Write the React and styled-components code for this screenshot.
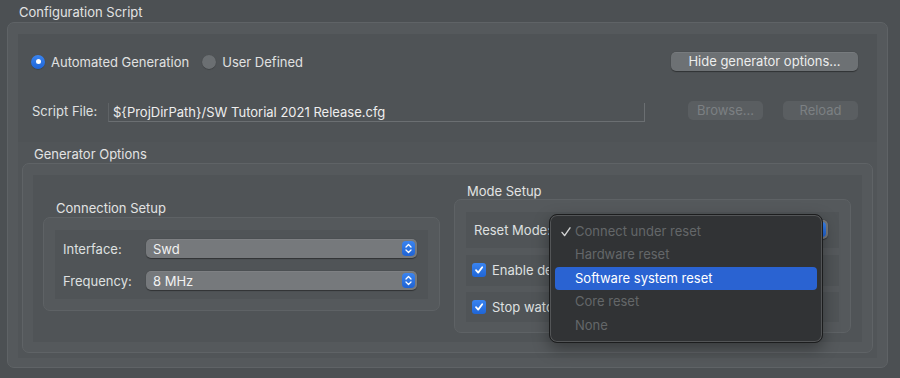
import React from 'react';
import styled, { createGlobalStyle } from 'styled-components';

const GlobalStyle = createGlobalStyle`
    html, body {
        margin: 0;
        padding: 0;
        background-color: #4c5053;
    }

    body {
        font-family: "Inter", "Liberation Sans", sans-serif;
        font-size: 13px;
        color: #dfe0e0;
        -webkit-font-smoothing: antialiased;
    }
`;

const Page = styled.div`
    width: 900px;
    height: 378px;
    padding: 0 0 0 7px;
    box-sizing: border-box;
    overflow: hidden;
`;

const GroupTitle = styled.div`
    height: ${props => props.h || 22}px;
    line-height: ${props => (props.h || 22) + (props.drop || 0)}px;
    padding-left: ${props => props.indent || 12}px;
    font-size: 13px;
    color: #e2e3e3;
    white-space: nowrap;
`;

const OuterBox = styled.div`
    width: 881px;
    box-sizing: border-box;
    border: 1px solid #5f6366;
    border-radius: 7px;
    padding: 11px 10px 9px 10px;
    background-color: #55595c;
`;

const OuterBody = styled.div`
    display: flex;
    flex-direction: column;
    background-color: #515558;
`;

const TopPanel = styled.div`
    height: 108px;
    display: flex;
    flex-direction: column;
    background-color: #4f5356;
    padding: 18px 19px 0 13px;
    box-sizing: border-box;
`;

const Row = styled.div`
    display: flex;
    align-items: center;
    height: 19px;
    margin-top: ${props => props.mt || 0}px;
`;

const Spacer = styled.div`
    flex: 1;
`;

const RadioItem = styled.label`
    display: flex;
    align-items: center;
    gap: 6px;
    margin-right: 13px;
    font-size: 13px;
    color: #e0e1e1;
`;

const RadioDot = styled.span`
    width: 14px;
    height: 14px;
    border-radius: 50%;
    box-sizing: border-box;
    display: flex;
    align-items: center;
    justify-content: center;
    background: ${props => props.on ? 'linear-gradient(#3a84f0, #1f65d6)' : '#6b6f72'};
    box-shadow: 0 0.5px 1px rgba(0, 0, 0, 0.35);

    &::after {
        content: '';
        display: ${props => props.on ? 'block' : 'none'};
        width: 5px;
        height: 5px;
        border-radius: 50%;
        background-color: #ffffff;
    }
`;

const PushButton = styled.button`
    height: 19px;
    width: ${props => props.w}px;
    margin-left: ${props => props.ml || 0}px;
    padding: 0;
    border: none;
    border-radius: 5px;
    font-family: inherit;
    font-size: 13px;
    line-height: 19px;
    background-color: ${props => props.disabled ? '#5a5e61' : '#6d7174'};
    color: ${props => props.disabled ? '#7c8083' : '#eceded'};
    box-shadow: ${props => props.disabled ? 'none' : '0 0.5px 1px rgba(0, 0, 0, 0.4), inset 0 0.5px 0 rgba(255, 255, 255, 0.15)'};
`;

const FieldLabel = styled.span`
    width: ${props => props.w}px;
    flex-shrink: 0;
    font-size: 13px;
    color: #dfe0e0;
    white-space: nowrap;
`;

const TextField = styled.div`
    width: 537px;
    height: 19px;
    box-sizing: border-box;
    margin-top: 3px;
    padding-left: 4px;
    line-height: 18px;
    font-size: 13px;
    color: #eeeeee;
    border-left: 1px solid #5f6366;
    border-right: 1px solid #6b6f72;
    border-bottom: 1px solid #6b6f72;
    white-space: nowrap;
`;

const GenBox = styled.div`
    margin: 0 4px 5px 4px;
    border: 1px solid #5f6366;
    border-radius: 7px;
    padding: 11px 10px 10px 10px;
    background-color: #55595c;
`;

const GenBody = styled.div`
    height: 167px;
    display: flex;
    align-items: center;
    gap: 14px;
    padding-left: 10px;
    background-color: #505457;
`;

const Column = styled.div`
    width: 397px;
    display: flex;
    flex-direction: column;
    margin-bottom: ${props => props.mb || 0}px;
`;

const SubBox = styled.div`
    height: ${props => props.h}px;
    box-sizing: border-box;
    border: 1px solid #5e6265;
    border-radius: 7px;
    padding: ${props => props.pad};
    background-color: #55595c;
    display: flex;
    flex-direction: column;
    gap: ${props => props.gap || 0}px;
`;

const SubBody = styled.div`
    flex: 1;
    display: flex;
    flex-direction: column;
    gap: 13px;
    padding: 9px 11px 0 8px;
    background-color: #505457;
`;

const PopupRow = styled.div`
    display: flex;
    align-items: center;
    height: 19px;
`;

const Popup = styled.div`
    position: relative;
    flex: 1;
    height: 19px;
    box-sizing: border-box;
    border-radius: 5px;
    background-color: #76797c;
    box-shadow: 0 0.5px 1px rgba(0, 0, 0, 0.4), inset 0 0.5px 0 rgba(255, 255, 255, 0.12);
    display: flex;
    align-items: center;
    padding-left: 7px;
    font-size: 13px;
    color: #f2f2f2;
`;

const Stepper = styled.span`
    position: absolute;
    right: 2px;
    top: 2px;
    width: 13px;
    height: 15px;
    border-radius: 4px;
    background: linear-gradient(#3a84f0, #1f63d4);
    display: flex;
    align-items: center;
    justify-content: center;
`;

const ModeRow = styled.div`
    height: ${props => props.h}px;
    display: flex;
    align-items: center;
    padding: 0 11px 0 ${props => props.pl}px;
    margin-top: ${props => props.mt || 0}px;
    background-color: #505457;
    box-sizing: border-box;
`;

const CheckBox = styled.span`
    width: 14px;
    height: 14px;
    border-radius: 3px;
    background: linear-gradient(#3a84f0, #1f65d6);
    display: flex;
    align-items: center;
    justify-content: center;
    margin-right: 6px;
    flex-shrink: 0;
`;

const CheckLabel = styled.span`
    font-size: 13px;
    color: #dfe0e0;
    white-space: nowrap;
`;

const Menu = styled.div`
    position: absolute;
    left: -6px;
    top: -6px;
    width: 274px;
    height: 129px;
    box-sizing: border-box;
    border-radius: 8px;
    background-color: #313335;
    border: 1px solid #1c1d1e;
    box-shadow: inset 0 0 0 1px rgba(255, 255, 255, 0.17), 0 6px 16px rgba(0, 0, 0, 0.35);
    padding: 5px 5px;
    display: flex;
    flex-direction: column;
    z-index: 10;
`;

const MenuItem = styled.div`
    position: relative;
    height: 23.5px;
    line-height: 23px;
    padding-left: 20px;
    border-radius: 4px;
    font-size: 13px;
    background-color: ${props => props.active ? '#2a63d2' : 'transparent'};
    color: ${props => props.active ? '#ffffff' : '#646769'};
    white-space: nowrap;
`;

const CheckMark = styled.svg`
    position: absolute;
    left: 6px;
    top: 7px;
`;

const UpDown = () => (
    <svg width="7" height="11" viewBox="0 0 7 11">
        <path d="M1 4 L3.5 1.5 L6 4 M1 7 L3.5 9.5 L6 7" fill="none" stroke="#ffffff" strokeWidth="1.3" strokeLinecap="round" strokeLinejoin="round" />
    </svg>
);

const Tick = () => (
    <svg width="10" height="10" viewBox="0 0 10 10">
        <path d="M2 5.2 L4.2 7.6 L8.2 2.2" fill="none" stroke="#ffffff" strokeWidth="1.8" strokeLinecap="round" strokeLinejoin="round" />
    </svg>
);

const resetModes = ['Connect under reset', 'Hardware reset', 'Software system reset', 'Core reset', 'None'];

export default function App() {
    return (
        <Page>
            <GlobalStyle />
            <GroupTitle indent={12} drop={3}>Configuration Script</GroupTitle>
            <OuterBox>
                <OuterBody>
                    <TopPanel>
                        <Row>
                            <RadioItem><RadioDot on />Automated Generation</RadioItem>
                            <RadioItem><RadioDot />User Defined</RadioItem>
                            <Spacer />
                            <PushButton w={187}>Hide generator options...</PushButton>
                        </Row>
                        <Row mt={30}>
                            <FieldLabel w={76} style={{ paddingLeft: 1 }}>Script File:</FieldLabel>
                            <TextField>{'${ProjDirPath}/SW Tutorial 2021 Release.cfg'}</TextField>
                            <Spacer />
                            <PushButton w={75} disabled>Browse...</PushButton>
                            <PushButton w={75} ml={20} disabled>Reload</PushButton>
                        </Row>
                    </TopPanel>
                    <GroupTitle h={21} indent={16} drop={3}>Generator Options</GroupTitle>
                    <GenBox>
                        <GenBody>
                            <Column mb={5}>
                                <GroupTitle h={16} indent={13} drop={-2}>Connection Setup</GroupTitle>
                                <SubBox h={94} pad="12px 11px 11px 11px">
                                    <SubBody>
                                        <PopupRow>
                                            <FieldLabel w={83}>Interface:</FieldLabel>
                                            <Popup>Swd<Stepper><UpDown /></Stepper></Popup>
                                        </PopupRow>
                                        <PopupRow>
                                            <FieldLabel w={83}>Frequency:</FieldLabel>
                                            <Popup>8 MHz<Stepper><UpDown /></Stepper></Popup>
                                        </PopupRow>
                                    </SubBody>
                                </SubBox>
                            </Column>
                            <Column mb={2}>
                                <GroupTitle h={16} indent={13}>Mode Setup</GroupTitle>
                                <SubBox h={134} pad="12px 11px 9px 11px" gap={7}>
                                    <ModeRow h={36} pl={8}>
                                        <FieldLabel w={81}>Reset Mode:</FieldLabel>
                                        <Popup>
                                            <Stepper><UpDown /></Stepper>
                                            <Menu>
                                                {resetModes.map((mode, index) =>
                                                    <MenuItem key={index} active={index == 2}>
                                                        {index == 0 ?
                                                            <CheckMark width="10" height="10" viewBox="0 0 10 10">
                                                                <path d="M1 5.4 L3.6 8.6 L9 0.8" fill="none" stroke="#d2d3d3" strokeWidth="1.4" strokeLinecap="round" strokeLinejoin="round" />
                                                            </CheckMark>
                                                        : null}
                                                        {mode}
                                                    </MenuItem>
                                                )}
                                            </Menu>
                                        </Popup>
                                    </ModeRow>
                                    <ModeRow h={31} pl={6}>
                                        <CheckBox><Tick /></CheckBox>
                                        <CheckLabel>Enable de</CheckLabel>
                                    </ModeRow>
                                    <ModeRow h={30} pl={6} mt={-1}>
                                        <CheckBox><Tick /></CheckBox>
                                        <CheckLabel>Stop watc</CheckLabel>
                                    </ModeRow>
                                </SubBox>
                            </Column>
                        </GenBody>
                    </GenBox>
                </OuterBody>
            </OuterBox>
        </Page>
    );
}
